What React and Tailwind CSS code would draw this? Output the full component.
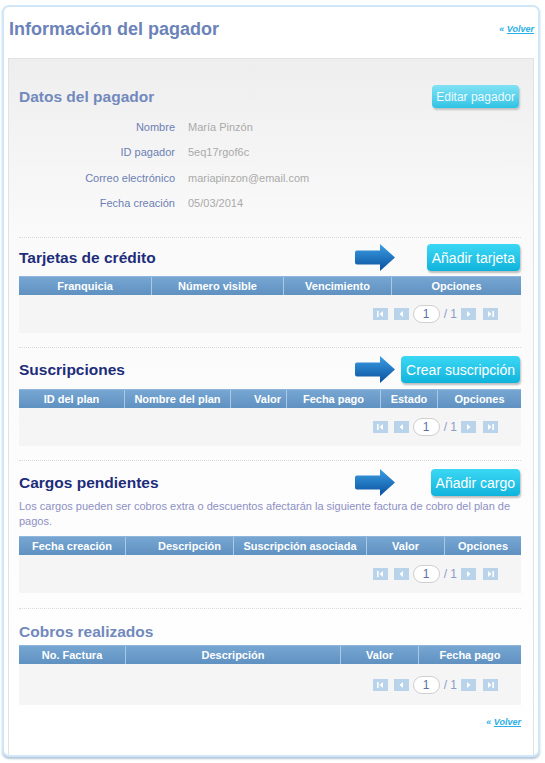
const font = { fontFamily: '"Liberation Sans", Arial, sans-serif' };

function Arrow() {
  return (
    <svg width="42" height="29" viewBox="0 0 42 29" className="shrink-0">
      <defs>
        <linearGradient id="arrowGrad" x1="0" y1="0" x2="0" y2="1">
          <stop offset="0%" stopColor="#3aa0e4" />
          <stop offset="100%" stopColor="#0b4f9e" />
        </linearGradient>
      </defs>
      <path
        d="M3 7.5 H26 V1 L41 14.5 L26 28 V21.5 H3 Q1 21.5 1 19.5 V9.5 Q1 7.5 3 7.5 Z"
        fill="url(#arrowGrad)"
      />
    </svg>
  );
}

function PageBtn({ kind }) {
  const glyph = {
    first: (
      <>
        <rect x="4" y="3" width="1.6" height="6" fill="#fff" />
        <path d="M10 3 L6.5 6 L10 9 Z" fill="#fff" />
      </>
    ),
    prev: <path d="M9 3 L5.5 6 L9 9 Z" fill="#fff" />,
    next: <path d="M6 3 L9.5 6 L6 9 Z" fill="#fff" />,
    last: (
      <>
        <path d="M5 3 L8.5 6 L5 9 Z" fill="#fff" />
        <rect x="9.4" y="3" width="1.6" height="6" fill="#fff" />
      </>
    ),
  }[kind];
  return (
    <svg width="15" height="12" viewBox="0 0 15 12" className="shrink-0">
      <rect x="0" y="0" width="15" height="12" fill="#b9d4ea" />
      {glyph}
    </svg>
  );
}

function Pager() {
  return (
    <div className="flex items-center justify-end pr-[23px] h-full">
      <PageBtn kind="first" />
      <div className="w-[6px]" />
      <PageBtn kind="prev" />
      <div className="ml-[4px] w-[27px] h-[18px] rounded-[9px] border border-[#cfcfcf] bg-white flex items-center justify-center text-[12px] text-[#5e6fa8]">
        1
      </div>
      <span className="ml-[4px] mr-[4px] text-[12px] text-[#8a9cc8]">/ 1</span>
      <PageBtn kind="next" />
      <div className="w-[7px]" />
      <PageBtn kind="last" />
    </div>
  );
}

function DataTable({ cols, bodyH = 38 }) {
  return (
    <div>
      <div className="flex h-[19px] bg-gradient-to-b from-[#77a6d2] to-[#5f91c1] border-t border-[#8fb6dc]">
        {cols.map((c, i) => (
          <div
            key={i}
            style={{ width: c.w }}
            className={
              "shrink-0 flex items-center text-[11px] font-bold text-white " +
              (i > 0 ? "border-l border-[#a9c8e6] " : "") +
              (c.right ? "justify-end" : "justify-center")
            }
          >
            <span style={c.right ? { paddingRight: c.right } : undefined}>{c.t}</span>
          </div>
        ))}
      </div>
      <div style={{ height: bodyH }} className="bg-[#f5f5f5]">
        <Pager />
      </div>
    </div>
  );
}

function CyanButton({ children }) {
  return (
    <button className="h-[27px] px-[5px] rounded-[4px] bg-gradient-to-b from-[#3ad8f4] to-[#0db3dc] text-white text-[14px] leading-none shadow-[1px_2px_2px_rgba(0,0,0,0.25)]">
      {children}
    </button>
  );
}

function SectionHead({ title, button }) {
  return (
    <div className="flex items-center h-[27px]">
      <h3 className="flex-1 text-[15.5px] font-bold text-[#1d2d7a]">{title}</h3>
      <div className="w-[167px] pr-[1px] flex items-center justify-between">
        <Arrow />
        <CyanButton>{button}</CyanButton>
      </div>
    </div>
  );
}

const sep = "border-t border-dotted border-[#d9d9d9]";

export default function App() {
  const rows = [
    ["Nombre", "María Pinzón"],
    ["ID pagador", "5eq17rgof6c"],
    ["Correo electrónico", "mariapinzon@email.com"],
    ["Fecha creación", "05/03/2014"],
  ];
  return (
    <div style={font} className="w-[545px] h-[763px] bg-white">
      <div className="ml-[2px] mt-[5px] w-[538px] h-[752px] rounded-[7px] border-2 border-[#cfe7f8] shadow-[0_2px_2px_rgba(90,130,170,0.45)] bg-white flex flex-col">
        <div className="flex items-center justify-between h-[51px] pl-[5px] pr-[4px] pb-[6px]">
          <h1 className="text-[18px] font-bold text-[#6b83b8]">Información del pagador</h1>
          <a className="text-[9px] font-bold italic text-[#2aaee4]">
            « <span className="underline">Volver</span>
          </a>
        </div>
        <div className="mx-[4px] flex-1 border border-b-0 border-[#e2e2e2] bg-gradient-to-b from-[#eeeeee] via-[#fafafa] via-[25%] to-white pl-[10px] pr-[12px]">
          {/* datos */}
          <div className="pt-[26px]">
            <div className="flex items-center justify-between h-[23px] pr-[2px]">
              <h2 className="text-[15.5px] font-bold text-[#7189bc]">Datos del pagador</h2>
              <button className="h-[23px] px-[4px] rounded-[4px] bg-gradient-to-b from-[#7fe2f4] to-[#2ac3e5] text-[#f0fbff] text-[12px] leading-none shadow-[1px_2px_2px_rgba(0,0,0,0.2)]">
                Editar pagador
              </button>
            </div>
            <div className="mt-[6px] pb-[21px]">
              {rows.map(([l, v]) => (
                <div key={l} className="flex items-center h-[25.6px] text-[11px]">
                  <div className="w-[156px] text-right text-[#6c7fb4]">{l}</div>
                  <div className="ml-[13px] text-[#aaaaaa]">{v}</div>
                </div>
              ))}
            </div>
          </div>

          <div className={sep + " pt-[6px] pb-[14px]"}>
            <SectionHead title="Tarjetas de crédito" button="Añadir tarjeta" />
            <div className="mt-[5px]">
              <DataTable
                cols={[
                  { t: "Franquicia", w: 132 },
                  { t: "Número visible", w: 132 },
                  { t: "Vencimiento", w: 108 },
                  { t: "Opciones", w: 130 },
                ]}
              />
            </div>
          </div>

          <div className={sep + " pt-[8px] pb-[14px]"}>
            <SectionHead title="Suscripciones" button="Crear suscripción" />
            <div className="mt-[6px]">
              <DataTable
                cols={[
                  { t: "ID del plan", w: 105 },
                  { t: "Nombre del plan", w: 106 },
                  { t: "Valor", w: 56, right: 5 },
                  { t: "Fecha pago", w: 94 },
                  { t: "Estado", w: 57 },
                  { t: "Opciones", w: 84 },
                ]}
              />
            </div>
          </div>

          <div className={sep + " pt-[8px] pb-[15px]"}>
            <SectionHead title="Cargos pendientes" button="Añadir cargo" />
            <p className="mt-[3px] text-[11px] leading-[15px] text-[#8e90c4]">
              Los cargos pueden ser cobros extra o descuentos afectarán la siguiente factura de cobro del plan de pagos.
            </p>
            <div className="mt-[7px]">
              <DataTable
                cols={[
                  { t: "Fecha creación", w: 106 },
                  { t: "Descripción", w: 108, right: 12 },
                  { t: "Suscripción asociada", w: 133 },
                  { t: "Valor", w: 78 },
                  { t: "Opciones", w: 77 },
                ]}
              />
            </div>
          </div>

          <div className={sep + " pt-[13px]"}>
            <h3 className="text-[15.5px] font-bold text-[#7189bc] h-[20px] leading-[20px]">Cobros realizados</h3>
            <div className="mt-[3px]">
              <DataTable
                bodyH={41}
                cols={[
                  { t: "No. Factura", w: 106 },
                  { t: "Descripción", w: 215 },
                  { t: "Valor", w: 78 },
                  { t: "Fecha pago", w: 103 },
                ]}
              />
            </div>
            <div className="mt-[11px] flex justify-end">
              <a className="text-[9px] font-bold italic text-[#2aaee4]">
                « <span className="underline">Volver</span>
              </a>
            </div>
          </div>
        </div>
      </div>
    </div>
  );
}
